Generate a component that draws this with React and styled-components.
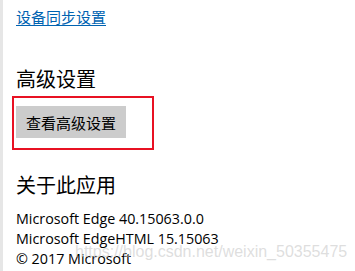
import React from "react";
import styled, { createGlobalStyle } from "styled-components";

const Global = createGlobalStyle`
  html, body { margin: 0; padding: 0; background: #fff; }
  body { font-family: "Noto Sans CJK SC", "Liberation Sans", sans-serif; }
`;

const Page = styled.div`
  position: relative;
  width: 355px;
  height: 271px;
  overflow: hidden;
  background: #fff;
  border-left: 3px solid #e6e6e6;
  box-sizing: border-box;
  padding: 6px 0 0 13px;
  display: flex;
  flex-direction: column;
`;

const Link = styled.a`
  font-size: 15px;
  line-height: 22px;
  color: #0063b1;
  text-decoration: underline;
  text-underline-offset: 2px;
  align-self: flex-start;
`;

const Heading = styled.h2`
  margin: ${(p) => p.$top}px 0 0 0;
  font-size: 20px;
  font-weight: 400;
  line-height: 26px;
  color: #000;
`;

const Highlight = styled.div`
  align-self: flex-start;
  margin: 4px 0 0 -4px;
  width: 142px;
  height: 54px;
  box-sizing: border-box;
  border: 2px solid #e81123;
  padding: 8px 0 0 2px;
`;

const Button = styled.button`
  width: 110px;
  height: 32px;
  border: none;
  background: #cccccc;
  color: #000;
  font-family: "Noto Sans CJK SC", sans-serif;
  font-size: 15px;
  padding: 0;
  margin: 0;
`;

const Info = styled.div`
  margin-top: 11px;
  display: flex;
  flex-direction: column;
`;

const Line = styled.div`
  font-family: "Open Sans", "Liberation Sans", sans-serif;
  font-size: 14.3px;
  line-height: 20px;
  color: #000;
`;

const Watermark = styled.div`
  position: absolute;
  left: 72px;
  top: 243px;
  font-family: "Liberation Sans", Arial, sans-serif;
  font-size: 16px;
  color: rgba(200, 200, 200, 0.6);
  white-space: nowrap;
  pointer-events: none;
`;

export default function App() {
  return (
    <>
      <Global />
      <Page>
        <Link href="#">设备同步设置</Link>
        <Heading $top={38}>高级设置</Heading>
        <Highlight>
          <Button>查看高级设置</Button>
        </Highlight>
        <Heading $top={22}>关于此应用</Heading>
        <Info>
          <Line>Microsoft Edge 40.15063.0.0</Line>
          <Line>Microsoft EdgeHTML 15.15063</Line>
          <Line>© 2017 Microsoft</Line>
        </Info>
        <Watermark>https://blog.csdn.net/weixin_50355475</Watermark>
      </Page>
    </>
  );
}
